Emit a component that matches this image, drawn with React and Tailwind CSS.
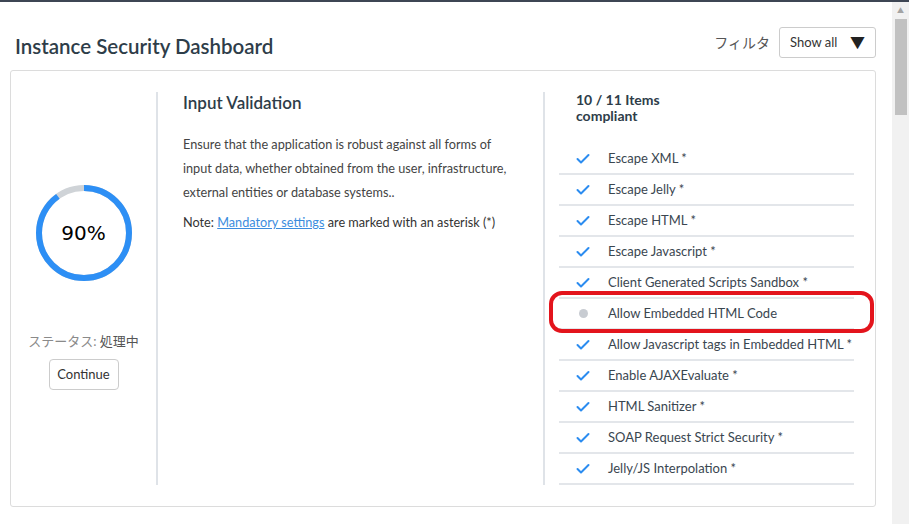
import React from 'react';

const font = { fontFamily: 'Lato, "Noto Sans CJK JP", sans-serif' };

const items = [
  { label: 'Escape XML *', ok: true },
  { label: 'Escape Jelly *', ok: true },
  { label: 'Escape HTML *', ok: true },
  { label: 'Escape Javascript *', ok: true },
  { label: 'Client Generated Scripts Sandbox *', ok: true },
  { label: 'Allow Embedded HTML Code', ok: false },
  { label: 'Allow Javascript tags in Embedded HTML *', ok: true },
  { label: 'Enable AJAXEvaluate *', ok: true },
  { label: 'HTML Sanitizer *', ok: true },
  { label: 'SOAP Request Strict Security *', ok: true },
  { label: 'Jelly/JS Interpolation *', ok: true },
];

const Check = () => (
  <svg width="14" height="12" viewBox="0 0 14 12" fill="none">
    <polyline points="1.5,6 5,9.5 12.5,2" stroke="#2b8cf0" strokeWidth="2" strokeLinecap="round" strokeLinejoin="round" />
  </svg>
);

const Ring = ({ percent }) => {
  const r = 45;
  const c = 2 * Math.PI * r;
  return (
    <div className="relative w-[98px] h-[98px]">
      <svg width="98" height="98" viewBox="0 0 98 98">
        <circle cx="49" cy="49" r={r} fill="none" stroke="#cfd3d7" strokeWidth="6" />
        <circle
          cx="49"
          cy="49"
          r={r}
          fill="none"
          stroke="#2d8ff5"
          strokeWidth="6"
          strokeDasharray={`${(c * percent) / 100} ${c}`}
          transform="rotate(-90 49 49)"
        />
      </svg>
      <div
        className="absolute inset-0 flex items-center justify-center text-[20px] text-black"
        style={{ fontFamily: '"DejaVu Sans", sans-serif' }}
      >
        {percent}%
      </div>
    </div>
  );
};

export default function App() {
  return (
    <div className="w-[909px] h-[524px] bg-white flex flex-col overflow-hidden" style={font}>
      {/* top bar */}
      <div className="h-[2px] bg-[#3e4654]" />

      <div className="flex flex-1">
        {/* main */}
        <div className="flex-1 pl-[10px] pr-[16px]">
          {/* header */}
          <div className="flex items-start justify-between pt-[25px] mb-[10px]">
            <h1 className="pl-[5px] mt-[5px] text-[20.5px] leading-[28px] font-semibold text-[#2e3d49]">
              Instance Security Dashboard
            </h1>
            <div className="flex items-center">
              <span className="text-[14px] text-[#555] mr-[9px]">フィルタ</span>
              <div className="w-[97px] h-[31px] border border-[#cccccc] rounded-[3px] flex items-center justify-between pl-[10px] pr-[10px] text-[13px] text-[#333]">
                <span>Show all</span>
                <span className="text-[15px] text-[#222] leading-none">▼</span>
              </div>
            </div>
          </div>

          {/* card */}
          <div className="relative h-[437px] border border-[#dcdcdc] rounded-[3px] flex py-[21px]">
            {/* left column */}
            <div className="w-[147px] border-r-2 border-[#dfe3e8] flex flex-col items-center">
              <div className="mt-[92px]">
                <Ring percent={90} />
              </div>
              <div className="mt-[50px] text-[13px] leading-[18px]">
                <span className="text-[#8a8a8a]">ステータス: </span>
                <span className="text-[#555]">処理中</span>
              </div>
              <button className="mt-[9px] w-[70px] h-[31px] border border-[#cccccc] rounded-[4px] text-[13px] text-[#333] bg-white">
                Continue
              </button>
            </div>

            {/* middle column */}
            <div className="w-[387px] border-r-2 border-[#dfe3e8] pl-[25px] pr-[20px]">
              <h2 className="text-[17px] leading-[22px] font-semibold text-[#2e3d49]">Input Validation</h2>
              <p className="mt-[18px] text-[12.7px] leading-[24px] text-[#444]">
                Ensure that the application is robust against all forms of input data, whether obtained from the user, infrastructure, external entities or database systems..
              </p>
              <p className="mt-[9px] text-[12.7px] leading-[18px] text-[#333]">
                Note: <span className="text-[#3c8dde] underline">Mandatory settings</span> are marked with an asterisk (*)
              </p>
            </div>

            {/* right column */}
            <div className="flex-1 pl-[14px] pr-[21px]">
              <div className="pl-[17px] text-[14px] leading-[16px] font-bold text-[#2e3d49]">
                10 / 11 Items
                <br />
                compliant
              </div>
              <ul className="mt-[20px]">
                {items.map((it) => (
                  <li
                    key={it.label}
                    className="h-[31px] border-b-2 border-[#e3e6ea] flex items-center pl-[17px] text-[13px] text-[#3a4650]"
                  >
                    <span className="w-[14px] flex items-center justify-center">
                      {it.ok ? <Check /> : <span className="w-[9px] h-[9px] rounded-full bg-[#c8ccd2]" />}
                    </span>
                    <span className="ml-[18px]">{it.label}</span>
                  </li>
                ))}
              </ul>
            </div>

            {/* highlight annotation */}
            <div className="absolute left-[538px] top-[220px] w-[325px] h-[42px] border-4 border-[#e3141c] rounded-[13px]" />
          </div>
        </div>

        {/* scrollbar */}
        <div className="w-[17px] bg-[#f1f1f1] flex flex-col items-center">
          <div className="h-[17px] flex items-center justify-center text-[#a3a3a3] text-[7px]">▲</div>
          <div className="w-[12px] h-[96px] bg-[#c1c1c1]" />
        </div>
      </div>
    </div>
  );
}
